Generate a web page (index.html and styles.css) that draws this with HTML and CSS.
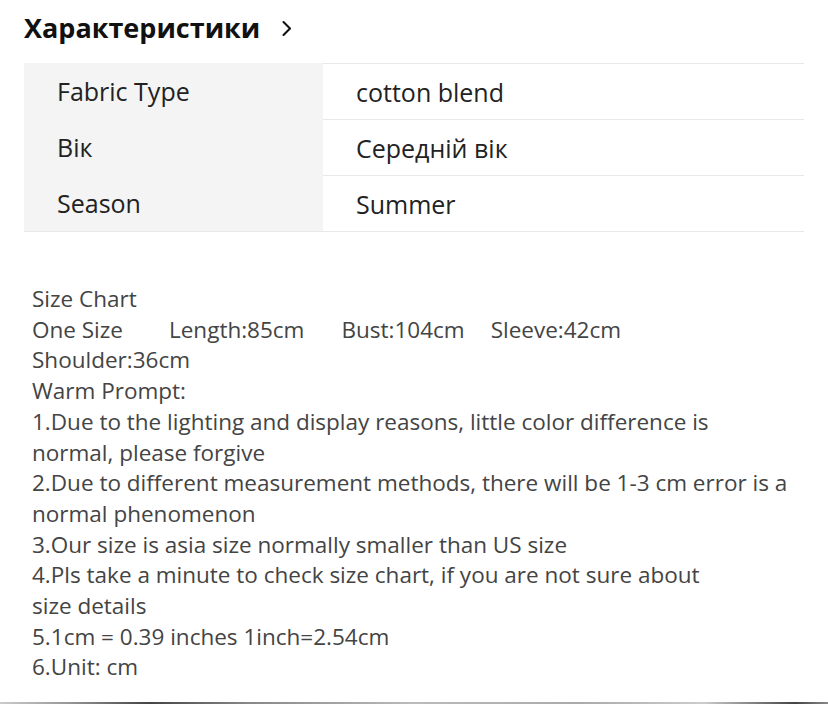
FILE: index.html
```html
<!DOCTYPE html>
<html lang="uk">
<head>
<meta charset="utf-8">
<link rel="stylesheet" href="styles.css">
</head>
<body>
<div class="page">
  <h2 class="title">Характеристики <span class="chev"><svg width="12" height="17" viewBox="0 0 12 17"><path d="M2.5 2 L9 8.5 L2.5 15" fill="none" stroke="#111" stroke-width="2.1" stroke-linecap="round" stroke-linejoin="round"/></svg></span></h2>
  <div class="specs">
    <div class="row"><div class="key">Fabric Type</div><div class="val">cotton blend</div></div>
    <div class="row"><div class="key">Вік</div><div class="val">Середній вік</div></div>
    <div class="row"><div class="key">Season</div><div class="val">Summer</div></div>
  </div>
  <div class="desc">
    <div>Size Chart</div>
    <div><span class="g1">One Size</span><span class="g2">Length:85cm</span><span class="g3">Bust:104cm</span><span>Sleeve:42cm</span></div>
    <div>Shoulder:36cm</div>
    <div>Warm Prompt:</div>
    <div>1.Due to the lighting and display reasons, little color difference is<br>normal, please forgive</div>
    <div>2.Due to different measurement methods, there will be 1-3 cm error is a<br>normal phenomenon</div>
    <div>3.Our size is asia size normally smaller than US size</div>
    <div>4.Pls take a minute to check size chart, if you are not sure about<br>size details</div>
    <div>5.1cm = 0.39 inches 1inch=2.54cm</div>
    <div>6.Unit: cm</div>
  </div>
  <div class="strip"></div>
</div>
</body>
</html>
```
FILE: styles.css
```css
html, body { margin: 0; padding: 0; background: #fff; }
body { font-family: "Open Sans", "Noto Sans", sans-serif; width: 828px; height: 704px; overflow: hidden; }
.page { position: relative; height: 704px; }
.title {
  margin: 0;
  padding: 4px 0 0 24px;
  height: 52px;
  box-sizing: border-box;
  font-size: 27px;
  font-weight: 700;
  color: #111;
  display: flex;
  align-items: center;
  line-height: 34px;
}
.chev { display: inline-flex; margin-left: 21px; margin-top: 1px; }
.specs {
  margin: 11px 24px 0 24px;
  border-bottom: 1px solid #e8e8e8;
}
.row { display: flex; height: 56px; }
.key {
  width: 299px;
  background: #f4f4f4;
  padding-left: 33px;
  box-sizing: border-box;
  display: flex; align-items: center;
  font-size: 25px; color: #222;
}
.val {
  flex: 1;
  border-top: 1px solid #e8e8e8;
  padding-left: 33px;
  display: flex; align-items: center;
  font-size: 25px; color: #222;
}
.desc {
  margin-top: 52px;
  padding-left: 32px;
  font-size: 22.5px;
  line-height: 30.7px;
  color: #444;
  white-space: nowrap;
}
.g1 { margin-right: 46px; }
.g2 { margin-right: 37px; }
.g3 { margin-right: 26px; }
.strip {
  position: absolute; left: 0; right: 0; bottom: 0; height: 2px;
  background: linear-gradient(90deg, #ccc 0%, #999 8%, #444 18%, #888 30%, #bbb 50%, #aaa 70%, #ccc 85%, #444 96%, #888 100%);
}
```
